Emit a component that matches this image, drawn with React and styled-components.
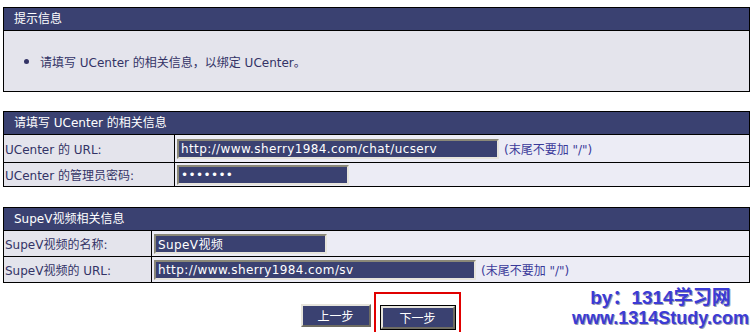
import styled, { createGlobalStyle } from 'styled-components';

const Global = createGlobalStyle`
  html, body {
    margin: 0;
    padding: 0;
    background: #ffffff;
  }
  body {
    font-family: Tahoma, "DejaVu Sans", "Noto Sans CJK SC", sans-serif;
    font-size: 12px;
    color: #333366;
  }
`;

const Page = styled.div`
  width: 753px;
  height: 332px;
  overflow: hidden;
  padding: 7px 3px 0 3px;
  box-sizing: border-box;
`;

const Panel = styled.div`
  border: 1px solid #000;
  margin-bottom: ${p => p.gap || 0}px;
`;

const Head = styled.div`
  height: 22px;
  line-height: 22px;
  background: #3a4171;
  color: #ffffff;
  padding-left: 10px;
  border-bottom: 1px solid #000;
`;

const TipBody = styled.div`
  height: 60px;
  background: #e4e4ec;
  display: flex;
  align-items: center;
  padding-left: 20px;
`;

const Bullet = styled.span`
  width: 5px;
  height: 5px;
  border-radius: 50%;
  background: #333366;
  margin-right: 11px;
`;

const Row = styled.div`
  display: grid;
  grid-template-columns: ${p => p.label}px 1fr;
  height: ${p => p.h}px;
  border-top: ${p => (p.first ? 'none' : '1px solid #000')};
`;

const Label = styled.div`
  background: #e4e4ec;
  border-right: 1px solid #000;
  display: flex;
  align-items: center;
  padding-left: 1px;
`;

const Value = styled.div`
  background: #ececf5;
  display: flex;
  align-items: center;
  padding-left: 2px;
`;

const Field = styled.input`
  box-sizing: border-box;
  width: ${p => p.w}px;
  height: 20px;
  background: #3a4171;
  color: #ffffff;
  font: inherit;
  letter-spacing: 0.4px;
  padding: 0 2px;
  border: 2px solid;
  border-color: #8a8878 #e6e4dc #e6e4dc #8a8878;
  outline: none;
`;

const Note = styled.span`
  color: #3a3a9a;
  margin-left: 5px;
`;

const Footer = styled.div`
  display: grid;
  grid-template-columns: 1fr auto 1fr;
  align-items: start;
  margin-top: 9px;
`;

const Buttons = styled.div`
  grid-column: 2;
  display: flex;
  align-items: flex-start;
  gap: 3px;
  padding-left: 8px;
`;

const Btn = styled.button`
  box-sizing: border-box;
  width: ${p => p.w}px;
  height: 23px;
  background: #3a4171;
  color: #ffffff;
  font: inherit;
  border: 2px solid;
  border-color: #e6e4dc #6e6c62 #6e6c62 #e6e4dc;
  padding: 0;
  margin-top: 12px;
  ${p => p.focus && 'outline: 1px solid #000; outline-offset: 0;'}
`;

const Marked = styled.div`
  border: 2px solid #e00000;
  border-bottom: none;
  padding: 0 4px 3px 5px;
  height: 39px;
`;

const Stamp = styled.div`
  justify-self: end;
  margin-top: -4px;
  text-align: center;
  font-family: "Liberation Sans", Arial, "Noto Sans CJK SC", sans-serif;
  font-weight: bold;
  color: #3b3bd6;
  text-shadow: 1px 1px 0 #9a9ab0;
  line-height: 20px;
  padding-right: 1px;
`;

const StampTop = styled.div`
  font-size: 19px;
`;

const StampBottom = styled.div`
  font-size: 18px;
`;

export default function App() {
  return (
    <Page>
      <Global />
      <Panel gap={19}>
        <Head>提示信息</Head>
        <TipBody>
          <Bullet />
          请填写 UCenter 的相关信息，以绑定 UCenter。
        </TipBody>
      </Panel>

      <Panel gap={20}>
        <Head>请填写 UCenter 的相关信息</Head>
        <Row label={171} h={27} first>
          <Label>UCenter 的 URL:</Label>
          <Value>
            <Field w={322} defaultValue="http://www.sherry1984.com/chat/ucserv" />
            <Note>(末尾不要加 "/")</Note>
          </Value>
        </Row>
        <Row label={171} h={23}>
          <Label>UCenter 的管理员密码:</Label>
          <Value>
            <Field w={172} type="password" defaultValue="1234567" />
          </Value>
        </Row>
      </Panel>

      <Panel>
        <Head>SupeV视频相关信息</Head>
        <Row label={148} h={25} first>
          <Label>SupeV视频的名称:</Label>
          <Value>
            <Field w={173} defaultValue="SupeV视频" />
          </Value>
        </Row>
        <Row label={148} h={25}>
          <Label>SupeV视频的 URL:</Label>
          <Value>
            <Field w={322} defaultValue="http://www.sherry1984.com/sv" />
            <Note>(末尾不要加 "/")</Note>
          </Value>
        </Row>
      </Panel>

      <Footer>
        <Buttons>
          <Btn w={70}>上一步</Btn>
          <Marked>
            <Btn w={74} focus>下一步</Btn>
          </Marked>
        </Buttons>
        <Stamp>
          <StampTop>by：1314学习网</StampTop>
          <StampBottom>www.1314Study.com</StampBottom>
        </Stamp>
      </Footer>
    </Page>
  );
}
